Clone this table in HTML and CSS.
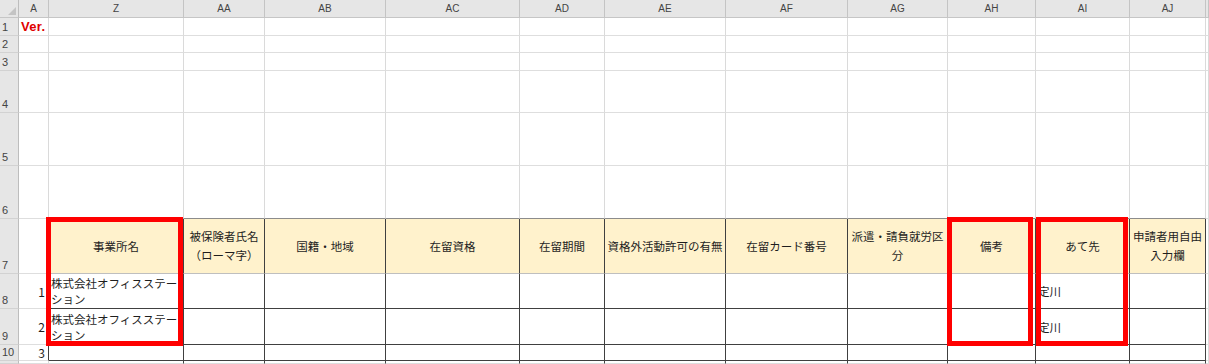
FILE: index.html
```html
<!DOCTYPE html>
<html lang="ja">
<head>
<meta charset="utf-8">
<title>Sheet</title>
<link rel="stylesheet" href="styles.css">
</head>
<body>
<div class="sheet">
  <div class="grid">
    <!-- column headers -->
    <div class="corner"><svg width="8" height="8" viewBox="0 0 8 8"><polygon points="8,0 8,8 0,8" fill="#c4c4c4"/></svg></div>
    <div class="ch">A</div><div class="ch">Z</div><div class="ch">AA</div><div class="ch">AB</div><div class="ch">AC</div><div class="ch">AD</div><div class="ch">AE</div><div class="ch">AF</div><div class="ch">AG</div><div class="ch">AH</div><div class="ch">AI</div><div class="ch">AJ</div><div class="ch"></div>

    <!-- row 1 -->
    <div class="rh">1</div><div class="ver">Ver.</div>
    <div></div><div></div><div></div><div></div><div></div><div></div><div></div><div></div><div></div><div></div><div></div><div></div>

    <!-- row 2 -->
    <div class="rh">2</div><div></div>
    <div></div><div></div><div></div><div></div><div></div><div></div><div></div><div></div><div></div><div></div><div></div><div></div>

    <!-- row 3 -->
    <div class="rh">3</div><div></div>
    <div></div><div></div><div></div><div></div><div></div><div></div><div></div><div></div><div></div><div></div><div></div><div></div>

    <!-- row 4 -->
    <div class="rh">4</div><div></div>
    <div></div><div></div><div></div><div></div><div></div><div></div><div></div><div></div><div></div><div></div><div></div><div></div>

    <!-- row 5 -->
    <div class="rh">5</div><div></div>
    <div></div><div></div><div></div><div></div><div></div><div></div><div></div><div></div><div></div><div></div><div></div><div></div>

    <!-- row 6 -->
    <div class="rh">6</div><div></div>
    <div class="above"></div><div class="above"></div><div class="above"></div><div class="above"></div><div class="above"></div><div class="above"></div><div class="above"></div><div class="above"></div><div class="above"></div><div class="above"></div><div class="above"></div><div></div>

    <!-- row 7 : table header -->
    <div class="rh">7</div><div class="edge"></div>
    <div class="hd">事業所名</div>
    <div class="hd">被保険者氏名<br>（ローマ字）</div>
    <div class="hd">国籍・地域</div>
    <div class="hd">在留資格</div>
    <div class="hd">在留期間</div>
    <div class="hd">資格外活動許可の有無</div>
    <div class="hd">在留カード番号</div>
    <div class="hd">派遣・請負就労区<br>分</div>
    <div class="hd">備考</div>
    <div class="hd">あて先</div>
    <div class="hd">申請者用自由<br>入力欄</div>
    <div></div>

    <!-- row 8 -->
    <div class="rh">8</div><div class="edge num">1</div>
    <div class="td txt">株式会社オフィスステー<br>ション</div>
    <div class="td"></div><div class="td"></div><div class="td"></div><div class="td"></div><div class="td"></div><div class="td"></div><div class="td"></div><div class="td"></div>
    <div class="td txt">定川</div>
    <div class="td"></div>
    <div></div>

    <!-- row 9 -->
    <div class="rh">9</div><div class="edge num">2</div>
    <div class="td txt">株式会社オフィスステー<br>ション</div>
    <div class="td"></div><div class="td"></div><div class="td"></div><div class="td"></div><div class="td"></div><div class="td"></div><div class="td"></div><div class="td"></div>
    <div class="td txt">定川</div>
    <div class="td"></div>
    <div></div>

    <!-- row 10 -->
    <div class="rh">10</div><div class="edge num">3</div>
    <div class="td"></div><div class="td"></div><div class="td"></div><div class="td"></div><div class="td"></div><div class="td"></div><div class="td"></div><div class="td"></div><div class="td"></div><div class="td"></div><div class="td"></div>
    <div></div>

    <!-- row 11 (partially visible) -->
    <div class="rh"></div><div></div>
    <div class="tv"></div><div class="tv"></div><div class="tv"></div><div class="tv"></div><div class="tv"></div><div class="tv"></div><div class="tv"></div><div class="tv"></div><div class="tv"></div><div class="tv"></div><div class="tv"></div>
    <div></div>
  </div>

  <div class="marks">
    <div class="mark mark-z"></div>
    <div class="mark mark-ah"></div>
    <div class="mark mark-ai"></div>
  </div>
</div>
</body>
</html>
```

FILE: styles.css
```css
body {
  margin: 0;
  background: #ffffff;
  overflow: hidden;
}

.sheet {
  position: relative;
  width: 1209px;
  height: 364px;
  overflow: hidden;
  font-family: "Noto Sans CJK JP", "Noto Sans", sans-serif;
  color: #1e1e1e;
}

.grid,
.marks {
  display: grid;
  grid-template-columns: 19px 30px 135px 81px 121px 134px 85px 121px 122px 100px 88px 94px 76px 3px;
  grid-template-rows: 18px 18px 17px 18px 42px 53px 53px 55px 35px 36px 16px 3px;
}

.grid > div {
  box-sizing: border-box;
  min-width: 0;
  overflow: hidden;
  border-right: 1px solid #dadada;
  border-bottom: 1px solid #dedede;
}

/* column headers */
.grid > .corner {
  background: #e6e6e6;
  border-right-color: #bdbdbd;
  border-bottom-color: #c6c6c6;
  display: flex;
  align-items: flex-end;
  justify-content: flex-end;
  padding: 0 2px 2px 0;
}

.grid > .ch {
  background: #e6e6e6;
  border-right-color: #c4c4c4;
  border-bottom-color: #c6c6c6;
  display: flex;
  align-items: flex-end;
  justify-content: center;
  padding-bottom: 2px;
  font-family: "Liberation Sans", Arial, sans-serif;
  font-size: 10px;
  line-height: 12px;
  color: #444444;
}

/* row headers */
.grid > .rh {
  background: #e6e6e6;
  border-right-color: #bdbdbd;
  border-bottom-color: #d2d2d2;
  display: flex;
  align-items: flex-end;
  padding: 0 0 1px 2px;
  font-family: "Liberation Sans", Arial, sans-serif;
  font-size: 11px;
  line-height: 13px;
  color: #444444;
}

/* A1 title */
.grid > .ver {
  white-space: nowrap;
  padding-left: 2px;
  display: flex;
  align-items: center;
  font-family: "Liberation Sans", Arial, sans-serif;
  font-weight: bold;
  font-size: 13px;
  letter-spacing: 0.3px;
  color: #e00000;
}

/* row 6 cells: top edge of the table */
.grid > .above {
  border-bottom-color: #8c8c8c;
}

/* column A next to the table */
.grid > .edge {
  border-right-color: #404040;
}

.grid > .num {
  display: flex;
  align-items: center;
  justify-content: flex-end;
  padding-right: 3px;
  font-size: 12px;
  color: #1e1e1e;
}

/* table header row */
.grid > .hd {
  background: #fff2cc;
  border-right-color: #404040;
  border-bottom-color: #bfbfbf;
  display: flex;
  align-items: center;
  justify-content: center;
  text-align: center;
  white-space: nowrap;
  font-size: 11.5px;
  line-height: 19px;
  color: #1e1e1e;
}

/* table body */
.grid > .td {
  border-right-color: #404040;
  border-bottom-color: #404040;
}

.grid > .txt {
  display: flex;
  align-items: center;
  padding-left: 2px;
  white-space: nowrap;
  font-size: 11.5px;
  line-height: 16px;
  color: #1e1e1e;
}

.grid > .tv {
  border-right-color: #404040;
}

/* red highlight boxes */
.marks {
  position: absolute;
  top: 0;
  left: 0;
  pointer-events: none;
}

.mark {
  border: 5px solid #ff0000;
  grid-row: 8 / 11;
}

.mark-z {
  grid-column: 3;
  margin: -2px 1px -1px -3px;
}

.mark-ah {
  grid-column: 11;
  margin: -2px 3px -1px -1px;
}

.mark-ai {
  grid-column: 12;
  margin: -2px 2px -1px 0;
}
```
